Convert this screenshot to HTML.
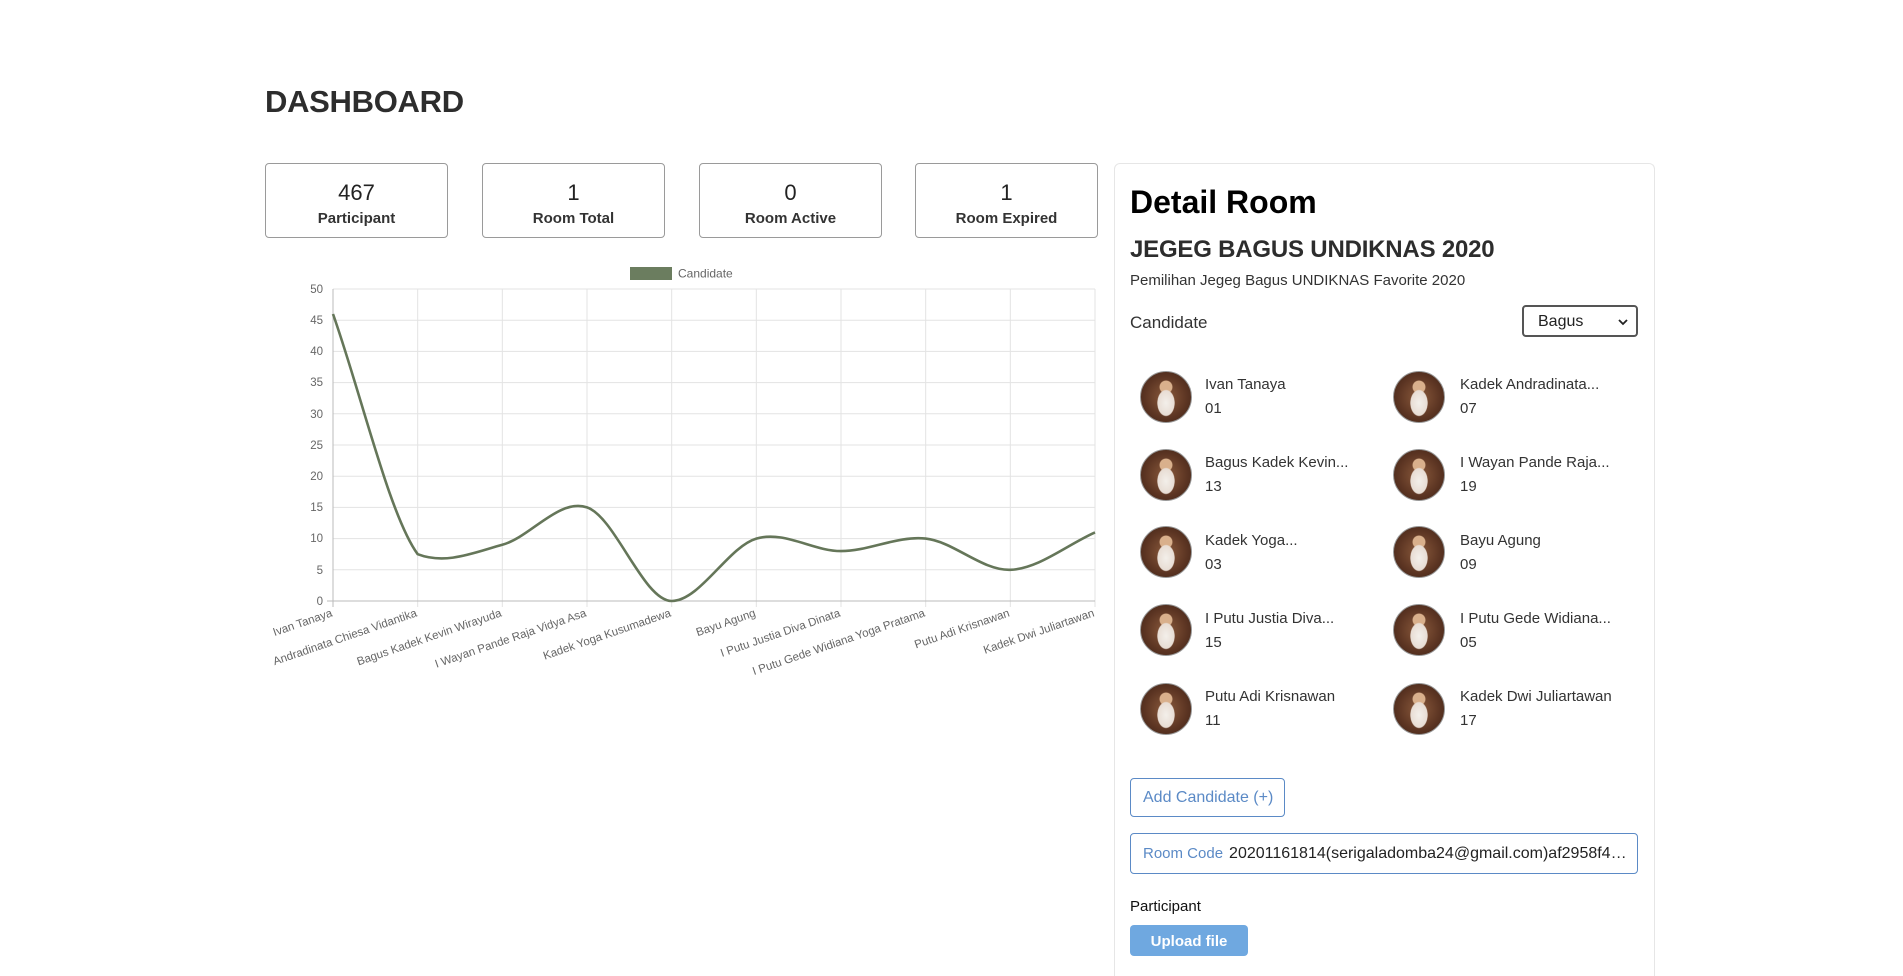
<!DOCTYPE html>
<html><head><meta charset="utf-8"><style>
*{box-sizing:border-box;margin:0;padding:0}
html,body{width:1903px;height:976px;overflow:hidden}
body{background:#fff;font-family:"Liberation Sans",sans-serif;color:#333;position:relative}
.a{position:absolute}
h1{position:absolute;left:265px;top:84px;font-size:31px;font-weight:700;color:#2d2d2d;letter-spacing:-0.3px}
.box{position:absolute;top:163px;width:183px;height:75px;border:1px solid #9a9a9a;border-radius:4px;text-align:center}
.box .n{font-size:22px;margin-top:16px;color:#222;line-height:26px}
.box .l{font-size:15px;font-weight:700;color:#333;line-height:20px;margin-top:3px}
.card{position:absolute;left:1114px;top:163px;width:541px;height:813px;border:1px solid #e6e6e6;border-bottom:none;border-radius:6px 6px 0 0}
.av{position:absolute;width:52px;height:52px;border-radius:50%;border:1px solid #999;
background:radial-gradient(ellipse 30% 45% at 50% 62%,#f3efea 0,#e8ddd4 55%,transparent 60%),radial-gradient(circle at 50% 30%,#d9b08c 0,#d9b08c 14%,transparent 16%),radial-gradient(circle at 50% 50%,#8a5a3c 0,#5b3422 60%,#3b2216 100%)}
.nm{position:absolute;font-size:15px;color:#333;line-height:24px}
</style></head><body>
<h1>DASHBOARD</h1>
<div class="box" style="left:265px"><div class="n">467</div><div class="l">Participant</div></div>
<div class="box" style="left:482px"><div class="n">1</div><div class="l">Room Total</div></div>
<div class="box" style="left:699px"><div class="n">0</div><div class="l">Room Active</div></div>
<div class="box" style="left:915px"><div class="n">1</div><div class="l">Room Expired</div></div>

<svg class="a" style="left:0;top:0" width="1110" height="700" font-family="Liberation Sans, sans-serif">
<rect x="630" y="267" width="42" height="13" fill="#6b7d5f"/>
<text x="678" y="277.5" font-size="12" fill="#666">Candidate</text>
<g stroke="#e3e3e3" stroke-width="1">
<line x1="333" y1="289" x2="1095" y2="289"/><line x1="333" y1="320.2" x2="1095" y2="320.2"/><line x1="333" y1="351.4" x2="1095" y2="351.4"/><line x1="333" y1="382.6" x2="1095" y2="382.6"/><line x1="333" y1="413.8" x2="1095" y2="413.8"/><line x1="333" y1="445" x2="1095" y2="445"/><line x1="333" y1="476.2" x2="1095" y2="476.2"/><line x1="333" y1="507.4" x2="1095" y2="507.4"/><line x1="333" y1="538.6" x2="1095" y2="538.6"/><line x1="333" y1="569.8" x2="1095" y2="569.8"/>
<line x1="417.7" y1="289" x2="417.7" y2="607"/><line x1="502.3" y1="289" x2="502.3" y2="607"/><line x1="587" y1="289" x2="587" y2="607"/><line x1="671.7" y1="289" x2="671.7" y2="607"/><line x1="756.3" y1="289" x2="756.3" y2="607"/><line x1="841" y1="289" x2="841" y2="607"/><line x1="925.7" y1="289" x2="925.7" y2="607"/><line x1="1010.3" y1="289" x2="1010.3" y2="607"/><line x1="1095" y1="289" x2="1095" y2="607"/>
</g>
<line x1="333" y1="289" x2="333" y2="607" stroke="#bbb"/>
<line x1="327" y1="601" x2="1095" y2="601" stroke="#bbb"/>
<g font-size="11.5" fill="#666" text-anchor="end">
<text x="323" y="293">50</text><text x="323" y="324">45</text><text x="323" y="355">40</text><text x="323" y="386">35</text><text x="323" y="418">30</text><text x="323" y="449">25</text><text x="323" y="480">20</text><text x="323" y="511">15</text><text x="323" y="542">10</text><text x="323" y="574">5</text><text x="323" y="605">0</text>
</g>
<g font-size="11.5" fill="#666" text-anchor="end">
<text transform="translate(333,616) rotate(-19)">Ivan Tanaya</text>
<text transform="translate(417.7,616) rotate(-19)">Andradinata Chiesa Vidantika</text>
<text transform="translate(502.3,616) rotate(-19)">Bagus Kadek Kevin Wirayuda</text>
<text transform="translate(587,616) rotate(-19)">I Wayan Pande Raja Vidya Asa</text>
<text transform="translate(671.7,616) rotate(-19)">Kadek Yoga Kusumadewa</text>
<text transform="translate(756.3,616) rotate(-19)">Bayu Agung</text>
<text transform="translate(841,616) rotate(-19)">I Putu Justia Diva Dinata</text>
<text transform="translate(925.7,616) rotate(-19)">I Putu Gede Widiana Yoga Pratama</text>
<text transform="translate(1010.3,616) rotate(-19)">Putu Adi Krisnawan</text>
<text transform="translate(1095,616) rotate(-19)">Kadek Dwi Juliartawan</text>
</g>
<path fill="none" stroke="#657659" stroke-width="2.6" d="M333,314 C361.2,394 389.5,515.7 417.7,554.2 C445.9,565 474.1,552.6 502.3,544.8 C530.5,537 558.8,498 587,507.4 C615.2,516.8 643.5,601 671.7,601 C699.9,601 728.1,546.9 756.3,538.6 C784.5,530.3 812.8,551.1 841,551.1 C869.2,551.1 897.5,535.5 925.7,538.6 C953.9,541.7 982.1,570.8 1010.3,569.8 C1038.5,568.8 1066.8,544.9 1095,532.4"/>
</svg>

<div class="card"></div>
<div class="a" style="left:1130px;top:184px;font-size:32px;font-weight:700;color:#000">Detail Room</div>
<div class="a" style="left:1130px;top:236px;font-size:24px;font-weight:700;color:#2d2d2d;letter-spacing:-0.2px">JEGEG BAGUS UNDIKNAS 2020</div>
<div class="a" style="left:1130px;top:272px;font-size:15px;color:#333">Pemilihan Jegeg Bagus UNDIKNAS Favorite 2020</div>
<div class="a" style="left:1130px;top:313px;font-size:17px;color:#333">Candidate</div>
<div class="a" style="left:1522px;top:305px;width:116px;height:32px;border:2px solid #555;border-radius:4px;font-size:16px;color:#222;padding:6px 0 0 14px">Bagus<svg class="a" style="right:8px;top:11px" width="10" height="8"><path d="M1 2 L5 6 L9 2" fill="none" stroke="#222" stroke-width="1.8"/></svg></div>

<div class="av" style="left:1140px;top:371px"></div><div class="nm" style="left:1205px;top:373px">Ivan Tanaya<br>01</div>
<div class="av" style="left:1393px;top:371px"></div><div class="nm" style="left:1460px;top:373px">Kadek Andradinata...<br>07</div>
<div class="av" style="left:1140px;top:449px"></div><div class="nm" style="left:1205px;top:451px">Bagus Kadek Kevin...<br>13</div>
<div class="av" style="left:1393px;top:449px"></div><div class="nm" style="left:1460px;top:451px">I Wayan Pande Raja...<br>19</div>
<div class="av" style="left:1140px;top:526px"></div><div class="nm" style="left:1205px;top:529px">Kadek Yoga...<br>03</div>
<div class="av" style="left:1393px;top:526px"></div><div class="nm" style="left:1460px;top:529px">Bayu Agung<br>09</div>
<div class="av" style="left:1140px;top:604px"></div><div class="nm" style="left:1205px;top:607px">I Putu Justia Diva...<br>15</div>
<div class="av" style="left:1393px;top:604px"></div><div class="nm" style="left:1460px;top:607px">I Putu Gede Widiana...<br>05</div>
<div class="av" style="left:1140px;top:683px"></div><div class="nm" style="left:1205px;top:685px">Putu Adi Krisnawan<br>11</div>
<div class="av" style="left:1393px;top:683px"></div><div class="nm" style="left:1460px;top:685px">Kadek Dwi Juliartawan<br>17</div>

<div class="a" style="left:1130px;top:778px;width:155px;height:39px;border:1px solid #5b8ac6;border-radius:4px;color:#5b8ac6;font-size:16px;padding:10px 0 0 12px">Add Candidate (+)</div>
<div class="a" style="left:1130px;top:833px;width:508px;height:41px;border:1px solid #5b8ac6;border-radius:4px;font-size:16px;padding:11px 0 0 12px;white-space:nowrap;color:#222"><span style="color:#5b8ac6;font-size:15px;margin-right:6px">Room Code</span>20201161814(serigaladomba24@gmail.com)af2958f4…</div>
<div class="a" style="left:1130px;top:898px;font-size:15px;color:#111">Participant</div>
<div class="a" style="left:1130px;top:925px;width:118px;height:31px;background:#6fa8e0;border-radius:4px;color:#fff;font-weight:700;font-size:15px;text-align:center;padding-top:8px">Upload file</div>
</body></html>
